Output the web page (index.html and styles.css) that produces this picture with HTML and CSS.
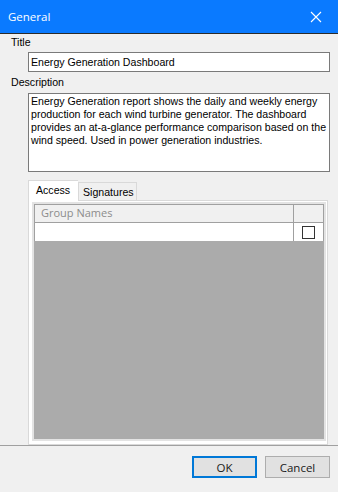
FILE: index.html
```html
<!DOCTYPE html>
<html lang="en">
<head>
    <meta charset="UTF-8">
    <meta name="viewport" content="width=device-width, initial-scale=1.0">
    <title>General</title>
    <link rel="stylesheet" href="styles.css">
</head>
<body>
    <div class="window">
        <div class="titlebar">
            <span class="caption">General</span>
            <svg class="close" width="12" height="12" viewBox="0 0 12 12">
                <path d="M1 1 L11 11 M11 1 L1 11" stroke="#fff" stroke-width="1.1" fill="none"/>
            </svg>
        </div>
        <div class="content">
            <label class="field-label" for="title">Title</label>
            <input class="text-input" id="title" type="text" value="Energy Generation Dashboard">
            <label class="field-label" for="desc">Description</label>
            <div class="text-area" id="desc">Energy Generation report shows the daily and weekly energy production for each wind turbine generator. The dashboard provides an at-a-glance performance comparison based on the wind speed. Used in power generation industries.</div>

            <div class="tabs">
                <div class="tab-strip">
                    <div class="tab active">Access</div>
                    <div class="tab">Signatures</div>
                </div>
                <div class="tab-panel">
                    <div class="grid">
                        <div class="grid-head">
                            <div class="cell name">Group Names</div>
                            <div class="cell check"></div>
                        </div>
                        <div class="grid-row">
                            <div class="cell name"></div>
                            <div class="cell check"><span class="checkbox"></span></div>
                        </div>
                        <div class="grid-empty"></div>
                    </div>
                </div>
            </div>
        </div>
        <div class="footer">
            <button class="btn default">OK</button>
            <button class="btn">Cancel</button>
        </div>
    </div>
</body>
</html>
```

FILE: styles.css
```css
body {
    margin: 0;
    padding: 0;
    background-color: #f0f0f0;
    font-family: "Liberation Sans", Arial, sans-serif;
    font-size: 10.6px;
    color: #000;
}
.window {
    width: 338px;
    height: 492px;
    display: flex;
    flex-direction: column;
    overflow: hidden;
}
.titlebar {
    height: 33px;
    background-color: #0a7aff;
    border-bottom: 1px solid #2b2b2b;
    display: flex;
    align-items: center;
    justify-content: space-between;
    padding: 0 16px 0 8px;
    flex-shrink: 0;
}
.caption {
    color: #fff;
    font-family: "Open Sans", sans-serif;
    font-size: 11.5px;
}
.close {
    display: block;
}
.content {
    padding: 2px 8px 0 11px;
    display: flex;
    flex-direction: column;
    flex: 1;
}
.field-label {
    line-height: 13px;
    height: 13px;
}
.text-input {
    margin: 3px 0 4px 17px;
    width: 302px;
    height: 20px;
    box-sizing: border-box;
    border: 1px solid #7a7a7a;
    padding: 0 2px;
    font-family: "Liberation Sans", Arial, sans-serif;
    font-size: 10.6px;
    outline: none;
    background: #fff;
}
.text-area {
    margin: 4px 0 8px 17px;
    width: 302px;
    height: 79px;
    box-sizing: border-box;
    border: 1px solid #7a7a7a;
    background: #fff;
    padding: 1px 2px;
    line-height: 13px;
}
.tabs {
    margin-left: 17px;
    width: 300px;
    display: flex;
    flex-direction: column;
}
.tab-strip {
    display: flex;
    align-items: flex-end;
    height: 21px;
    position: relative;
    z-index: 1;
    margin-bottom: -1px;
}
.tab {
    height: 18px;
    box-sizing: border-box;
    border: 1px solid #d9d9d9;
    border-bottom: none;
    background: #f0f0f0;
    padding: 0 4px;
    line-height: 18px;
    margin-bottom: 1px;
}
.tab.active {
    height: 21px;
    width: 50px;
    background: #fff;
    padding: 0 7px;
    line-height: 19px;
    margin-bottom: 0;
    border-right: none;
}
.tab.active + .tab {
    width: 59px;
}
.tab-panel {
    height: 245px;
    box-sizing: border-box;
    border: 1px solid #d9d9d9;
    background: #fff;
    padding: 1px 1px 3px 3px;
}
.grid {
    height: 100%;
    box-sizing: border-box;
    border: 2px solid #e3e3e3;
    display: flex;
    flex-direction: column;
}
.grid-head,
.grid-row {
    display: flex;
    border-left: 1px solid #a0a0a0;
    border-right: 1px solid #a0a0a0;
    border-top: 1px solid #a0a0a0;
}
.grid-head {
    height: 17px;
    background: #f0f0f0;
    color: #8c8c8c;
    font-family: "Open Sans", sans-serif;
    font-size: 11px;
}
.grid-row {
    height: 18px;
    background: #fff;
}
.cell {
    box-sizing: border-box;
}
.cell.name {
    flex: 1;
    padding-left: 6px;
    line-height: 16px;
    border-right: 1px solid #a0a0a0;
}
.cell.check {
    width: 29px;
    display: flex;
    align-items: center;
    justify-content: center;
}
.checkbox {
    width: 13px;
    height: 13px;
    box-sizing: border-box;
    border: 1px solid #333;
    background: #fff;
}
.grid-empty {
    flex: 1;
    background: #ababab;
}
.footer {
    height: 40px;
    border-top: 1px solid #a0a0a0;
    display: flex;
    justify-content: flex-end;
    align-items: flex-start;
    gap: 8px;
    padding: 10px 8px 0 0;
    flex-shrink: 0;
}
.btn {
    width: 65px;
    height: 22px;
    box-sizing: border-box;
    background: #e1e1e1;
    border: 1px solid #adadad;
    font-family: "Open Sans", sans-serif;
    font-size: 11.5px;
    color: #1a1a1a;
    padding: 0;
    cursor: pointer;
}
.btn.default {
    border: 2px solid #0078d7;
}
```
